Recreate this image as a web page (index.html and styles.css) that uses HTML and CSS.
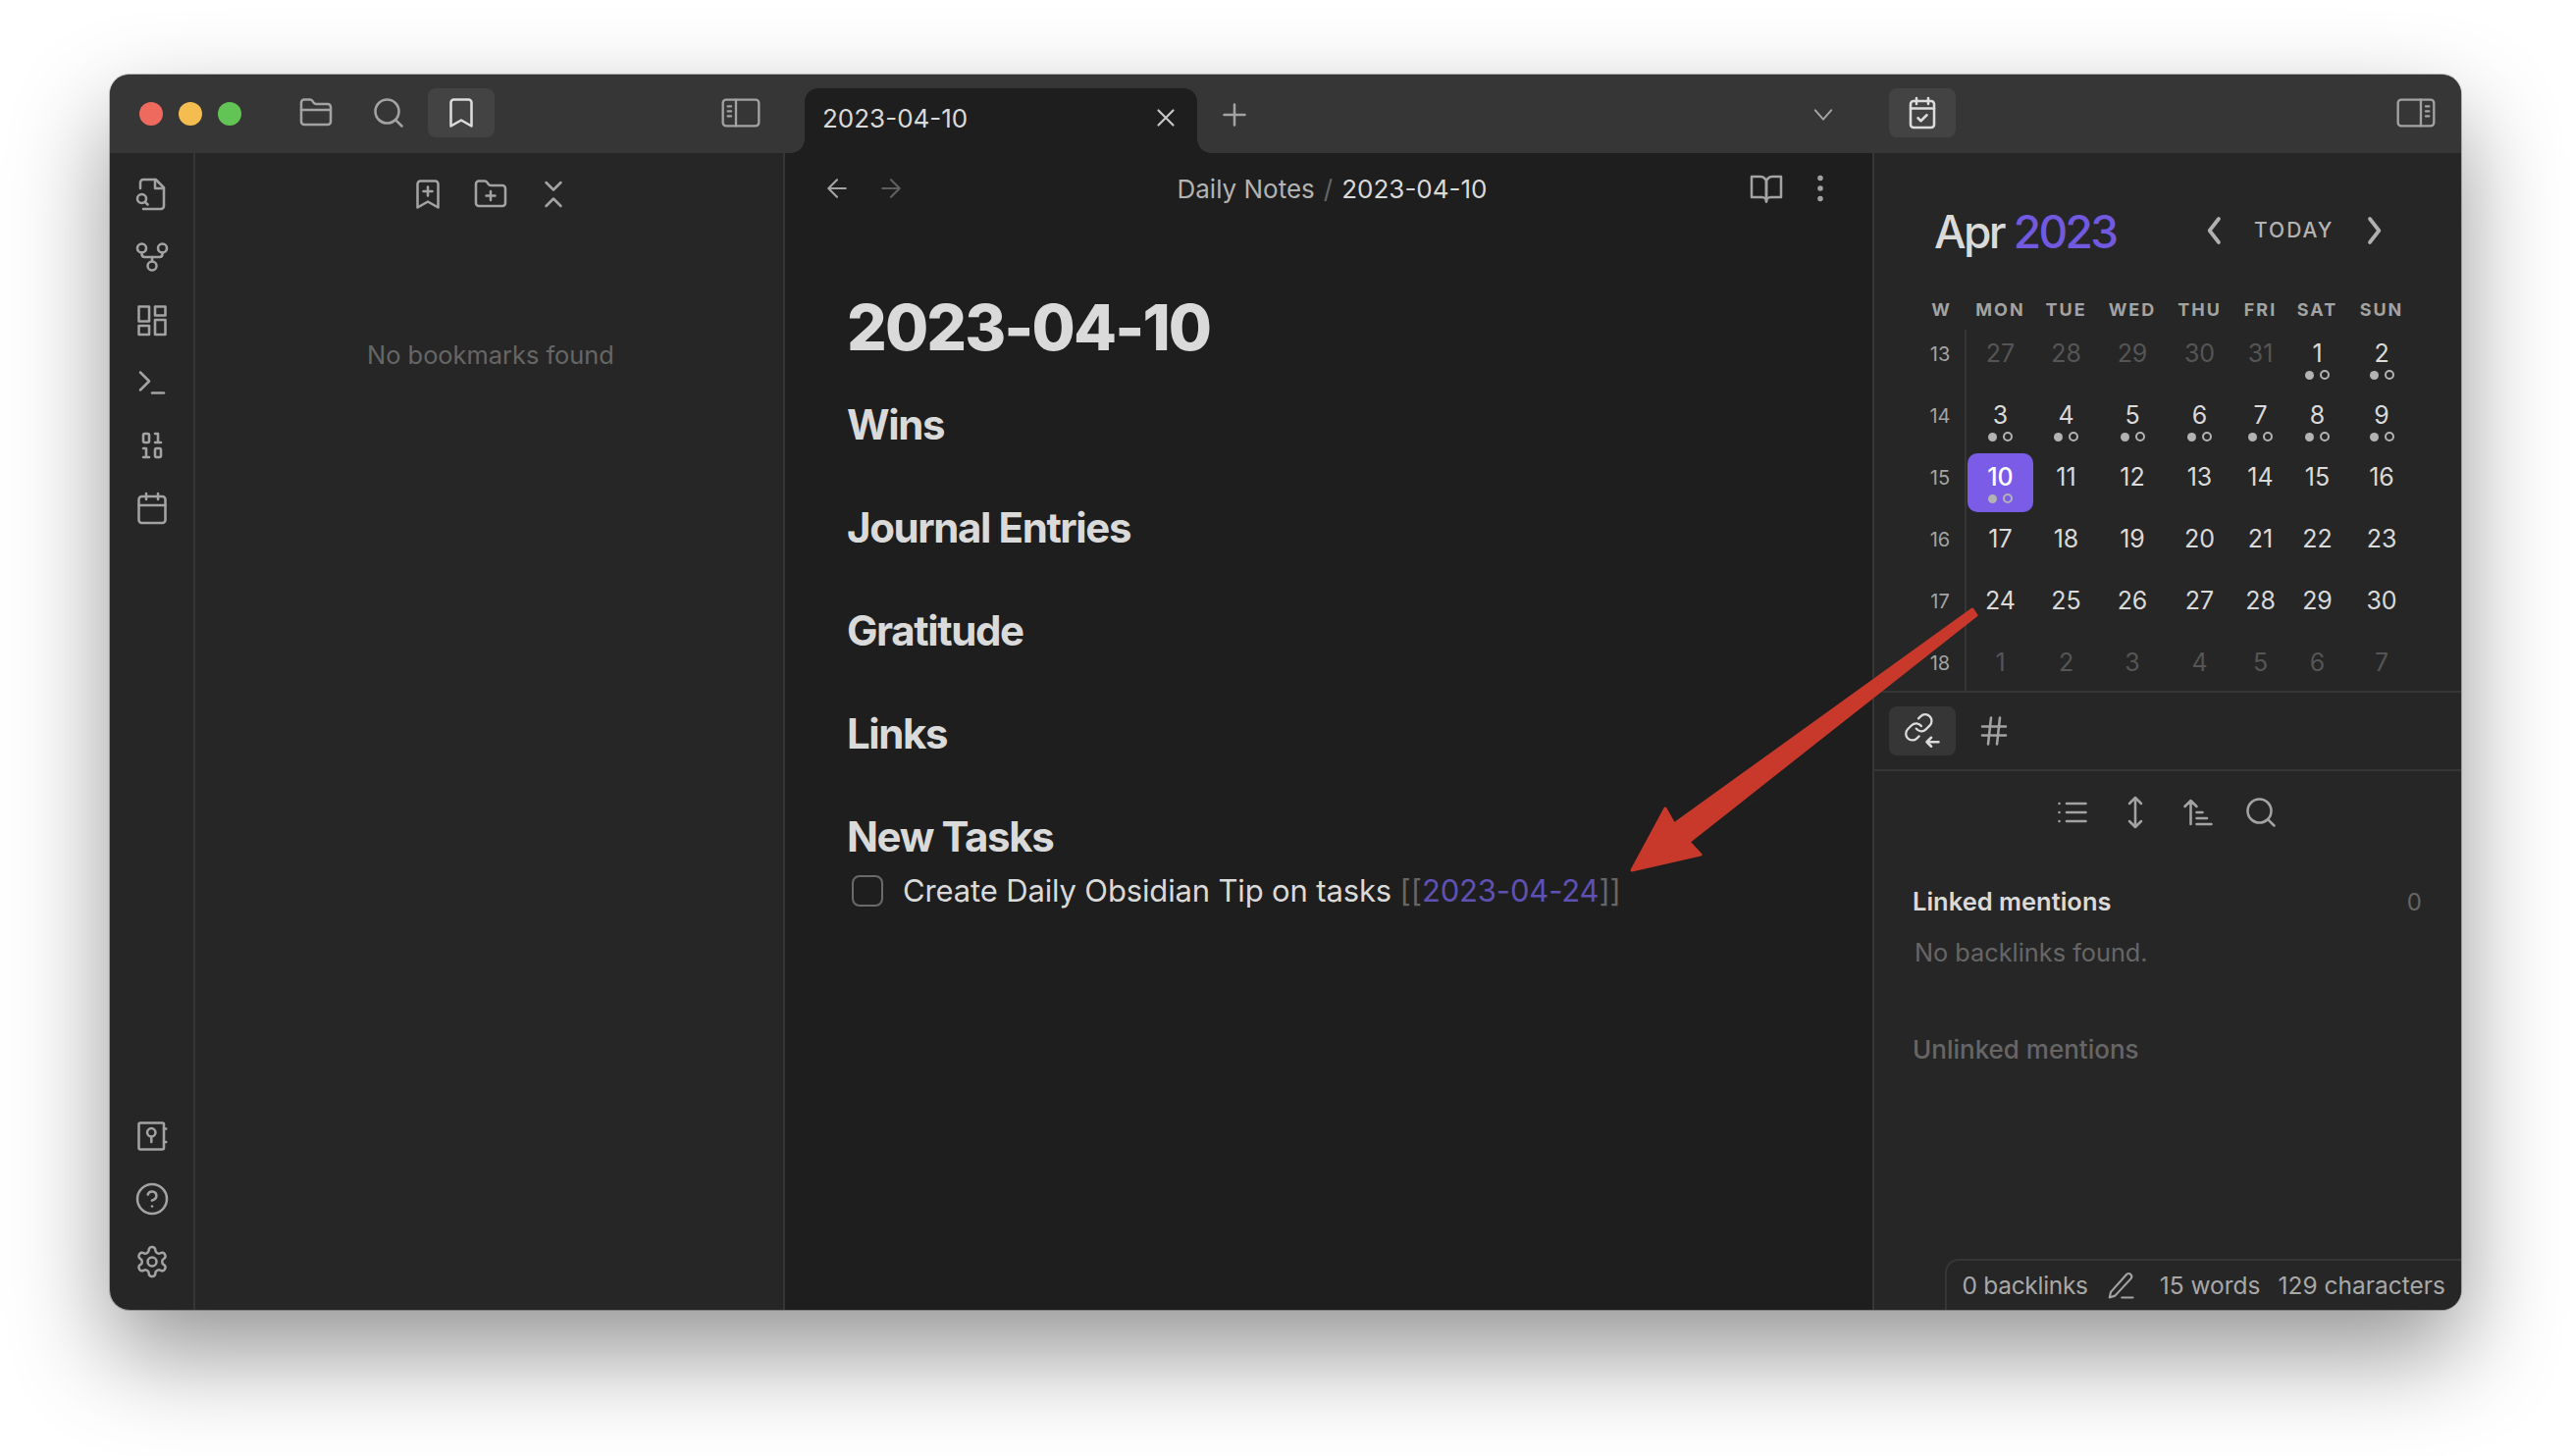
FILE: index.html
```html
<!DOCTYPE html>
<html lang="en">
<head>
    <meta charset="UTF-8">
    <title>2023-04-10 - Obsidian</title>
    <link rel="stylesheet" href="styles.css">
</head>
<body>
<svg class="sprite" xmlns="http://www.w3.org/2000/svg">
    <symbol id="i-folder" viewBox="0 0 24 24"><path d="M20 20a2 2 0 0 0 2-2V8a2 2 0 0 0-2-2h-7.9a2 2 0 0 1-1.69-.9L9.6 3.9A2 2 0 0 0 7.93 3H4a2 2 0 0 0-2 2v13a2 2 0 0 0 2 2Z"/><path d="M2 10h20"/></symbol>
    <symbol id="i-search" viewBox="0 0 24 24"><circle cx="11" cy="11" r="8"/><path d="m21 21-4.3-4.3"/></symbol>
    <symbol id="i-bookmark" viewBox="0 0 24 24"><path d="m19 21-7-4-7 4V5a2 2 0 0 1 2-2h10a2 2 0 0 1 2 2v16z"/></symbol>
    <symbol id="i-panel-left" viewBox="0 0 24 24"><rect x="1" y="4" width="22" height="16" rx="2"/><path d="M9 4v16M4 8h2M4 11h2M4 14h2"/></symbol>
    <symbol id="i-panel-right" viewBox="0 0 24 24"><rect x="1" y="4" width="22" height="16" rx="2"/><path d="M15 4v16M18 8h2M18 11h2M18 14h2"/></symbol>
    <symbol id="i-file-search" viewBox="0 0 24 24"><path d="M4 8V4a2 2 0 0 1 2-2h8.500L20 7.500V20a2 2 0 0 1-2 2H6"/><path d="M14 2v6h6"/><circle cx="5" cy="15" r="3"/><path d="m9 19-1.800-1.800"/></symbol>
    <symbol id="i-graph" viewBox="0 0 24 24"><circle cx="12" cy="18" r="3"/><circle cx="5" cy="6" r="3"/><circle cx="19" cy="6" r="3"/><path d="M19 9v1c0 1.200-.8 2-2 2H7c-1.200 0-2-.8-2-2V9"/><path d="M12 12v3"/></symbol>
    <symbol id="i-dashboard" viewBox="0 0 24 24"><rect x="3" y="3" width="7" height="10"/><rect x="14" y="3" width="7" height="6"/><rect x="14" y="12" width="7" height="10"/><rect x="3" y="16" width="7" height="6"/></symbol>
    <symbol id="i-terminal" viewBox="0 0 24 24"><path d="m4 17 6-6-6-6"/><path d="M12 19h8"/></symbol>
    <symbol id="i-binary" viewBox="0 0 24 24"><rect x="14" y="14" width="4" height="6" rx="1"/><rect x="6" y="4" width="4" height="6" rx="1"/><path d="M6 20h4M14 10h4M6 14h2v6M14 4h2v6"/></symbol>
    <symbol id="i-calendar" viewBox="0 0 24 24"><rect x="3" y="4" width="18" height="18" rx="2"/><path d="M16 2v4M8 2v4M3 10h18"/></symbol>
    <symbol id="i-calendar-check" viewBox="0 0 24 24"><rect x="4" y="4" width="16" height="18" rx="2"/><path d="M16 2v4M8 2v4M4 9h16"/><path d="m9 15.500 2 2 4-4"/></symbol>
    <symbol id="i-vault" viewBox="0 0 24 24"><rect x="3" y="3" width="17" height="18" rx="1"/><circle cx="11.500" cy="9.500" r="2.800"/><path d="M11.500 12.500V16M20 7h1.500M20 16h1.500"/></symbol>
    <symbol id="i-help" viewBox="0 0 24 24"><circle cx="12" cy="12" r="10"/><path d="M9.090 9a3 3 0 0 1 5.830 1c0 2-3 3-3 3"/><path d="M12 17h.01"/></symbol>
    <symbol id="i-settings" viewBox="0 0 24 24"><path d="M12.220 2h-.44a2 2 0 0 0-2 2v.18a2 2 0 0 1-1 1.730l-.43.25a2 2 0 0 1-2 0l-.15-.08a2 2 0 0 0-2.730.73l-.22.38a2 2 0 0 0 .73 2.730l.15.1a2 2 0 0 1 1 1.720v.51a2 2 0 0 1-1 1.740l-.15.09a2 2 0 0 0-.73 2.730l.22.38a2 2 0 0 0 2.730.73l.15-.08a2 2 0 0 1 2 0l.43.25a2 2 0 0 1 1 1.730V20a2 2 0 0 0 2 2h.44a2 2 0 0 0 2-2v-.18a2 2 0 0 1 1-1.730l.43-.25a2 2 0 0 1 2 0l.15.08a2 2 0 0 0 2.730-.73l.22-.39a2 2 0 0 0-.73-2.730l-.15-.08a2 2 0 0 1-1-1.740v-.5a2 2 0 0 1 1-1.740l.15-.09a2 2 0 0 0 .73-2.730l-.22-.38a2 2 0 0 0-2.730-.73l-.15.08a2 2 0 0 1-2 0l-.43-.25a2 2 0 0 1-1-1.730V4a2 2 0 0 0-2-2z"/><circle cx="12" cy="12" r="3"/></symbol>
    <symbol id="i-bookmark-plus" viewBox="0 0 24 24"><path d="m19 21-7-4-7 4V5a2 2 0 0 1 2-2h10a2 2 0 0 1 2 2v16z"/><path d="M12 7v6M15 10H9"/></symbol>
    <symbol id="i-folder-plus" viewBox="0 0 24 24"><path d="M20 20a2 2 0 0 0 2-2V8a2 2 0 0 0-2-2h-7.900a2 2 0 0 1-1.690-.9L9.600 3.900A2 2 0 0 0 7.930 3H4a2 2 0 0 0-2 2v13a2 2 0 0 0 2 2Z"/><path d="M12 10v6M9 13h6"/></symbol>
    <symbol id="i-collapse" viewBox="0 0 24 24"><path d="m7 20 5-5 5 5"/><path d="m7 4 5 5 5-5"/></symbol>
    <symbol id="i-x" viewBox="0 0 24 24"><path d="M18 6 6 18M6 6l12 12"/></symbol>
    <symbol id="i-plus" viewBox="0 0 24 24"><path d="M5 12h14M12 5v14"/></symbol>
    <symbol id="i-chevron-down" viewBox="0 0 24 24"><path d="m5 8 7 8 7-8"/></symbol>
    <symbol id="i-arrow-left" viewBox="0 0 24 24"><path d="M19 12H5M12 19l-7-7 7-7"/></symbol>
    <symbol id="i-arrow-right" viewBox="0 0 24 24"><path d="M5 12h14M12 5l7 7-7 7"/></symbol>
    <symbol id="i-book" viewBox="0 0 24 24"><path d="M2 4h6a4 4 0 0 1 4 4v13a3 3 0 0 0-3-3H2z"/><path d="M22 4h-6a4 4 0 0 0-4 4v13a3 3 0 0 1 3-3h7z"/></symbol>
    <symbol id="i-more" viewBox="0 0 24 24"><circle cx="12" cy="5" r="1"/><circle cx="12" cy="12" r="1"/><circle cx="12" cy="19" r="1"/></symbol>
    <symbol id="i-back" viewBox="0 0 24 24"><path d="m15 3-7 9 7 9"/></symbol>
    <symbol id="i-forward" viewBox="0 0 24 24"><path d="m9 3 7 9-7 9"/></symbol>
    <symbol id="i-backlinks" viewBox="0 0 24 24"><g transform="translate(-1 -1) scale(.88)"><path d="M10 13a5 5 0 0 0 7.540.54l3-3a5 5 0 0 0-7.070-7.070l-1.720 1.710"/><path d="M14 11a5 5 0 0 0-7.540-.54l-3 3a5 5 0 0 0 7.070 7.070l1.710-1.710"/></g><path d="M23 19.500h-8M18 16.500l-3 3 3 3"/></symbol>
    <symbol id="i-hash" viewBox="0 0 24 24"><path d="M4 9h16M4 15h16M10 3 8 21M16 3l-2 18"/></symbol>
    <symbol id="i-list" viewBox="0 0 24 24"><path d="M8 6h13M8 12h13M8 18h13M3 6h.01M3 12h.01M3 18h.01"/></symbol>
    <symbol id="i-move-vertical" viewBox="0 0 24 24"><path d="m8 18 4 4 4-4M8 6l4-4 4 4M12 2v20"/></symbol>
    <symbol id="i-sort" viewBox="0 0 24 24"><path d="m3 8 4-4 4 4M7 4v16M11 12h4M11 16h7M11 20h10"/></symbol>
    <symbol id="i-pencil" viewBox="0 0 24 24"><path d="M17 3a2.500 2.500 0 0 1 3.500 3.500L7.500 20.500 3 22l1-4.500z"/><path d="M13 22h9"/></symbol>
</svg>

<div class="window">
    <header class="titlebar">
        <div class="titlebar-left">
            <div class="traffic">
                <span class="light light-red"></span>
                <span class="light light-yellow"></span>
                <span class="light light-green"></span>
            </div>
            <div class="title-icons">
                <button class="icon-btn"><svg class="icon"><use href="#i-folder"/></svg></button>
                <button class="icon-btn"><svg class="icon"><use href="#i-search"/></svg></button>
                <button class="icon-btn is-active"><svg class="icon"><use href="#i-bookmark"/></svg></button>
            </div>
            <button class="icon-btn panel-toggle-left"><svg class="icon icon-panel"><use href="#i-panel-left"/></svg></button>
        </div>
        <div class="tabstrip">
            <div class="tab">
                <span class="tab-title">2023-04-10</span>
                <svg class="icon icon-tab-x"><use href="#i-x"/></svg>
            </div>
            <button class="icon-btn new-tab"><svg class="icon"><use href="#i-plus"/></svg></button>
            <button class="icon-btn tab-list"><svg class="icon icon-small"><use href="#i-chevron-down"/></svg></button>
        </div>
        <div class="titlebar-right">
            <button class="icon-btn is-active"><svg class="icon"><use href="#i-calendar-check"/></svg></button>
            <button class="icon-btn panel-toggle-right"><svg class="icon icon-panel"><use href="#i-panel-right"/></svg></button>
        </div>
    </header>

    <div class="workspace">
        <nav class="ribbon">
            <div class="ribbon-group">
                <svg class="icon"><use href="#i-file-search"/></svg>
                <svg class="icon"><use href="#i-graph"/></svg>
                <svg class="icon"><use href="#i-dashboard"/></svg>
                <svg class="icon"><use href="#i-terminal"/></svg>
                <svg class="icon"><use href="#i-binary"/></svg>
                <svg class="icon"><use href="#i-calendar"/></svg>
            </div>
            <div class="ribbon-group">
                <svg class="icon"><use href="#i-vault"/></svg>
                <svg class="icon"><use href="#i-help"/></svg>
                <svg class="icon"><use href="#i-settings"/></svg>
            </div>
        </nav>

        <aside class="left-panel">
            <div class="panel-actions">
                <svg class="icon"><use href="#i-bookmark-plus"/></svg>
                <svg class="icon"><use href="#i-folder-plus"/></svg>
                <svg class="icon"><use href="#i-collapse"/></svg>
            </div>
            <p class="empty-note">No bookmarks found</p>
        </aside>

        <main class="editor">
            <div class="view-header">
                <div class="view-nav">
                    <svg class="icon icon-nav"><use href="#i-arrow-left"/></svg>
                    <svg class="icon icon-nav is-faint"><use href="#i-arrow-right"/></svg>
                </div>
                <div class="breadcrumb">
                    <span class="crumb-parent">Daily Notes</span>
                    <span class="crumb-sep">/</span>
                    <span class="crumb-current">2023-04-10</span>
                </div>
                <div class="view-actions">
                    <svg class="icon"><use href="#i-book"/></svg>
                    <svg class="icon"><use href="#i-more"/></svg>
                </div>
            </div>
            <article class="note">
                <h1>2023-04-10</h1>
                <h2>Wins</h2>
                <h2>Journal Entries</h2>
                <h2>Gratitude</h2>
                <h2>Links</h2>
                <h2 class="tight">New Tasks</h2>
                <div class="task">
                    <span class="checkbox"></span>
                    <span>Create Daily Obsidian Tip on tasks <span class="bracket">[[</span><span class="link">2023-04-24</span><span class="bracket">]]</span></span>
                </div>
            </article>
        </main>

        <aside class="right-panel">
            <section class="calendar">
                <div class="cal-head">
                    <div class="cal-title">Apr <span class="cal-year">2023</span></div>
                    <div class="cal-nav">
                        <svg class="icon icon-cal-nav"><use href="#i-back"/></svg>
                        <span class="cal-today">TODAY</span>
                        <svg class="icon icon-cal-nav"><use href="#i-forward"/></svg>
                    </div>
                </div>
                <div class="cal-weekdays">
                    <span>W</span><span>MON</span><span>TUE</span><span>WED</span><span>THU</span><span>FRI</span><span>SAT</span><span>SUN</span>
                </div>
                <div class="cal-grid">
                    <div class="wk">13</div>
                    <div class="day out">27</div><div class="day out">28</div><div class="day out">29</div><div class="day out">30</div><div class="day out">31</div>
                    <div class="day">1<div class="dots"><i></i><b></b></div></div>
                    <div class="day">2<div class="dots"><i></i><b></b></div></div>
                    <div class="wk">14</div>
                    <div class="day">3<div class="dots"><i></i><b></b></div></div>
                    <div class="day">4<div class="dots"><i></i><b></b></div></div>
                    <div class="day">5<div class="dots"><i></i><b></b></div></div>
                    <div class="day">6<div class="dots"><i></i><b></b></div></div>
                    <div class="day">7<div class="dots"><i></i><b></b></div></div>
                    <div class="day">8<div class="dots"><i></i><b></b></div></div>
                    <div class="day">9<div class="dots"><i></i><b></b></div></div>
                    <div class="wk">15</div>
                    <div class="day today">10<div class="dots"><i></i><b></b></div></div>
                    <div class="day">11</div><div class="day">12</div><div class="day">13</div><div class="day">14</div><div class="day">15</div><div class="day">16</div>
                    <div class="wk">16</div>
                    <div class="day">17</div><div class="day">18</div><div class="day">19</div><div class="day">20</div><div class="day">21</div><div class="day">22</div><div class="day">23</div>
                    <div class="wk">17</div>
                    <div class="day">24</div><div class="day">25</div><div class="day">26</div><div class="day">27</div><div class="day">28</div><div class="day">29</div><div class="day">30</div>
                    <div class="wk">18</div>
                    <div class="day out">1</div><div class="day out">2</div><div class="day out">3</div><div class="day out">4</div><div class="day out">5</div><div class="day out">6</div><div class="day out">7</div>
                </div>
            </section>

            <div class="pane-tabs">
                <button class="icon-btn is-active-soft"><svg class="icon"><use href="#i-backlinks"/></svg></button>
                <button class="icon-btn"><svg class="icon"><use href="#i-hash"/></svg></button>
            </div>

            <div class="backlink-tools">
                <svg class="icon"><use href="#i-list"/></svg>
                <svg class="icon"><use href="#i-move-vertical"/></svg>
                <svg class="icon"><use href="#i-sort"/></svg>
                <svg class="icon"><use href="#i-search"/></svg>
            </div>

            <div class="mentions">
                <div class="mention-row">
                    <span class="mention-title">Linked mentions</span>
                    <span class="mention-count">0</span>
                </div>
                <p class="mention-empty">No backlinks found.</p>
                <div class="mention-title is-muted">Unlinked mentions</div>
            </div>
        </aside>
    </div>

    <footer class="statusbar">
        <span class="status-backlinks">0 backlinks</span>
        <svg class="icon icon-status"><use href="#i-pencil"/></svg>
        <span>15 words</span>
        <span>129 characters</span>
    </footer>

    <!-- annotation drawn on top of the screenshot, page coordinates -->
    <svg class="annotation" viewBox="112 76 2396 1259">
        <path d="M2010 621 L2014 627 L1721 858 L1733 871 L1663 887 L1697 824 L1706 840 Z"/>
    </svg>
</div>
</body>
</html>
```

FILE: styles.css
```css
* {
    box-sizing: border-box;
}
html, body {
    margin: 0;
    height: 100%;
    overflow: hidden;
    background: #fff;
}
body {
    padding: 76px 0 0 112px;
    font-family: Inter, "Noto Sans", sans-serif;
    color: #dadada;
}
h1, h2, p {
    margin: 0;
}
.sprite {
    display: none;
}

/* icons */
.icon {
    width: 36px;
    height: 36px;
    display: block;
    fill: none;
    stroke: #a3a3a3;
    stroke-width: 1.7;
    stroke-linecap: round;
    stroke-linejoin: round;
    flex: none;
}
.icon-panel {
    width: 40px;
    height: 40px;
    stroke-width: 1.4;
}
.icon-small {
    width: 28px;
    height: 28px;
}
.icon-tab-x {
    width: 30px;
    height: 30px;
    stroke: #c8c8c8;
}
.icon-nav {
    width: 30px;
    height: 30px;
}
.icon-nav.is-faint {
    stroke: #5f5f5f;
}
.icon-cal-nav {
    width: 32px;
    height: 32px;
    stroke-width: 2.8;
    stroke: #b0b0b0;
}
.icon-status {
    width: 30px;
    height: 30px;
    margin-right: 7px;
}
.icon-btn {
    width: 68px;
    height: 50px;
    padding: 0;
    border: 0;
    background: none;
    border-radius: 8px;
    display: flex;
    align-items: center;
    justify-content: center;
}
.icon-btn.is-active {
    background: #434343;
}
.icon-btn.is-active .icon {
    stroke: #dcdcdc;
}
.icon-btn.is-active-soft {
    background: #363636;
}
.icon-btn.is-active-soft .icon {
    stroke: #dcdcdc;
}

/* window */
.window {
    position: relative;
    width: 2396px;
    height: 1259px;
    display: flex;
    flex-direction: column;
    border-radius: 20px;
    overflow: hidden;
    background: #262626;
}
body::before {
    content: "";
    position: absolute;
    left: 112px;
    top: 76px;
    width: 2396px;
    height: 1259px;
    border-radius: 20px;
    box-shadow: 0 0 0 1px rgba(0, 0, 0, .25), 0 44px 100px rgba(0, 0, 0, .42);
}

/* title bar */
.titlebar {
    height: 80px;
    flex: none;
    display: flex;
    background: #363636;
}
.titlebar-left {
    width: 708px;
    flex: none;
    display: flex;
    align-items: flex-start;
    padding-top: 14px;
}
.traffic {
    display: flex;
    gap: 16px;
    padding: 14px 0 0 30px;
}
.light {
    width: 24px;
    height: 24px;
    border-radius: 50%;
}
.light-red { background: #ee6a5f; }
.light-yellow { background: #f5bd4f; }
.light-green { background: #61c454; }
.title-icons {
    display: flex;
    gap: 6px;
    margin-left: 42px;
}
.panel-toggle-left {
    margin-left: 217px;
}
.tabstrip {
    width: 1105px;
    flex: none;
    display: flex;
    align-items: flex-end;
}
.tab {
    position: relative;
    width: 400px;
    height: 66px;
    display: flex;
    align-items: center;
    justify-content: space-between;
    padding: 0 17px 6px 18px;
    background: #1e1e1e;
    border-radius: 14px 14px 0 0;
    font-size: 26px;
}
.tab::before,
.tab::after {
    content: "";
    position: absolute;
    bottom: 0;
    width: 14px;
    height: 14px;
}
.tab::before {
    left: -14px;
    background: radial-gradient(circle at 0 0, #363636 13.500px, #1e1e1e 14px);
}
.tab::after {
    right: -14px;
    background: radial-gradient(circle at 100% 0, #363636 13.500px, #1e1e1e 14px);
}
.new-tab {
    margin: 0 0 14px 4px;
}
.tab-list {
    margin: 0 0 14px 532px;
}
.titlebar-right {
    flex: 1;
    display: flex;
    align-items: flex-start;
    justify-content: space-between;
    padding: 14px 26px 0 0;
}
.panel-toggle-right {
    width: 40px;
}

/* columns */
.workspace {
    flex: 1;
    display: flex;
    min-height: 0;
}
.ribbon {
    width: 87px;
    flex: none;
    display: flex;
    flex-direction: column;
    justify-content: space-between;
    align-items: center;
    padding: 24px 0 31px;
    border-right: 2px solid #363636;
}
.ribbon-group {
    display: flex;
    flex-direction: column;
    gap: 28px;
}
.left-panel {
    width: 601px;
    flex: none;
    border-right: 2px solid #363636;
}
.panel-actions {
    display: flex;
    justify-content: center;
    gap: 28px;
    padding: 24px 0 0 3px;
}
.empty-note {
    margin-top: 130px;
    padding-left: 3px;
    text-align: center;
    font-size: 25.400px;
    color: #666;
}

/* editor */
.editor {
    width: 1110px;
    flex: none;
    background: #1e1e1e;
    border-right: 2px solid #363636;
}
.view-header {
    display: flex;
    align-items: center;
    justify-content: space-between;
    height: 72px;
    padding: 0 35px 0 38px;
}
.view-nav {
    display: flex;
    gap: 25px;
}
.view-actions {
    display: flex;
    gap: 19px;
}
.breadcrumb {
    display: flex;
    gap: 9px;
    font-size: 26px;
    margin-left: 10px;
}
.crumb-parent { color: #b3b3b3; }
.crumb-sep { color: #666; }
.note {
    padding: 72px 0 0 63px;
}
.note h1 {
    font-size: 64px;
    line-height: 68px;
    font-weight: 800;
    letter-spacing: -1.900px;
    margin-bottom: 39px;
}
.note h2 {
    font-size: 42px;
    line-height: 52px;
    font-weight: 700;
    letter-spacing: -1.400px;
    margin-bottom: 53px;
}
.note h2.tight {
    margin-bottom: 4px;
}
.task {
    display: flex;
    align-items: center;
    gap: 20px;
    font-size: 31px;
    letter-spacing: -.15px;
    line-height: 50px;
    padding-left: 5px;
}
.checkbox {
    width: 32px;
    height: 32px;
    border: 2px solid #6a6a6a;
    border-radius: 8px;
}
.bracket { color: #666; }
.link { color: #5f51b3; }

/* calendar */
.right-panel {
    flex: 1;
    min-width: 0;
}
.calendar {
    height: 550px;
    padding: 48px 0 0 42px;
    border-bottom: 2px solid #363636;
}
.cal-head {
    display: flex;
    align-items: center;
    height: 64px;
    padding-left: 19px;
}
.cal-title {
    font-size: 46px;
    font-weight: 500;
    letter-spacing: -2.600px;
    width: 270px;
}
.cal-year {
    color: #7159e0;
}
.cal-nav {
    display: flex;
    align-items: center;
    gap: 24px;
    margin-top: -3px;
}
.cal-today {
    font-size: 21px;
    font-weight: 500;
    letter-spacing: 2px;
    color: #b3b3b3;
}
.cal-weekdays,
.cal-grid {
    display: grid;
    grid-template-columns: 53px 67px 67px 68px 69px 55px 61px 70px;
}
.cal-weekdays {
    margin-top: 37px;
    font-size: 18px;
    font-weight: 700;
    letter-spacing: 2px;
    text-align: center;
    color: #a3a3a3;
}
.cal-grid {
    margin-top: 10px;
    grid-template-rows: repeat(5, 63px) 54px;
}
.wk {
    margin-right: 1px;
    border-right: 2px solid #363636;
    padding-top: 12px;
    text-align: center;
    font-size: 20px;
    line-height: 26px;
    color: #a3a3a3;
}
.day {
    text-align: center;
    font-size: 25px;
    line-height: 30px;
    padding-top: 9px;
}
.day.out {
    color: #555;
}
.day.today {
    height: 60px;
    background: #7a5ce6;
    border-radius: 10px;
    color: #fff;
    font-weight: 500;
}
.dots {
    display: flex;
    justify-content: center;
    align-items: center;
    gap: 6px;
    margin-top: 2px;
}
.dots i {
    width: 9px;
    height: 9px;
    border-radius: 50%;
    background: #b3b3b3;
}
.dots b {
    width: 10px;
    height: 10px;
    border-radius: 50%;
    border: 2px solid #b3b3b3;
}

/* right pane lower half */
.pane-tabs {
    display: flex;
    align-items: center;
    gap: 5px;
    height: 80px;
    padding: 0 0 0 15px;
    border-bottom: 2px solid #363636;
}
.backlink-tools {
    display: flex;
    justify-content: center;
    gap: 28px;
    padding-top: 24px;
    margin-left: -2px;
}
.mentions {
    padding: 57px 40px 0 39px;
}
.mention-row {
    display: flex;
    justify-content: space-between;
    align-items: center;
}
.mention-title {
    font-size: 25.500px;
    line-height: 32px;
    font-weight: 600;
}
.mention-title.is-muted {
    color: #666;
    font-size: 26px;
    font-weight: 500;
    margin-top: 67px;
}
.mention-count {
    font-size: 24px;
    color: #666;
}
.mention-empty {
    margin-top: 20px;
    padding-left: 2px;
    font-size: 25.300px;
    line-height: 32px;
    color: #666;
}

/* floats over the right pane */
.statusbar {
    position: absolute;
    right: 0;
    bottom: 0;
    height: 52px;
    display: flex;
    align-items: center;
    gap: 18px;
    padding: 0 16px 0 16px;
    border: 2px solid #363636;
    border-width: 2px 0 0 2px;
    border-top-left-radius: 14px;
    background: #262626;
    font-size: 24.500px;
    color: #a8a8a8;
}
.status-backlinks {
    letter-spacing: -.3px;
}
.annotation {
    position: absolute;
    left: 0;
    top: 0;
    width: 2396px;
    height: 1259px;
    pointer-events: none;
}
.annotation path {
    fill: #c8392b;
    stroke: #c8392b;
    stroke-width: 3;
    stroke-linejoin: round;
}
```
